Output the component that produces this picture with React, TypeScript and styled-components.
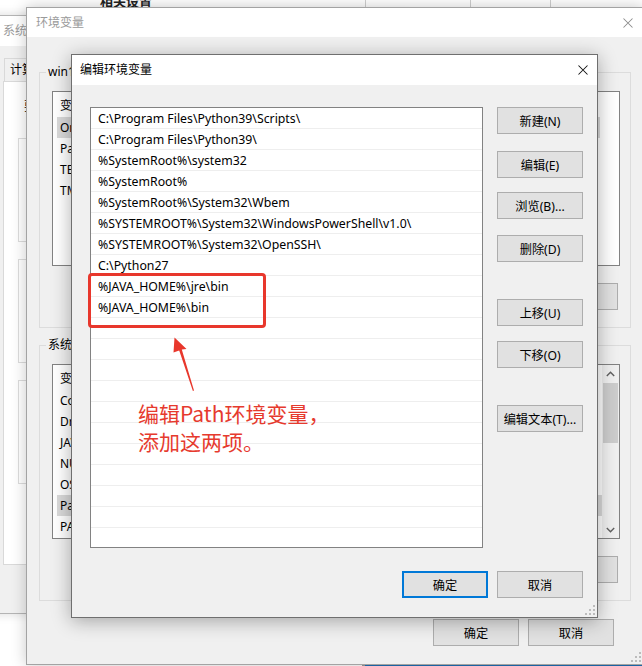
import React from "react";
import styled, { createGlobalStyle } from "styled-components";

const UI_FONT = `"Noto Sans", "Noto Sans CJK SC", sans-serif`;

const GlobalStyle = createGlobalStyle`
  html, body { margin: 0; padding: 0; background: #fff; }
  body {
    width: 642px; height: 666px; overflow: hidden;
    font-family: ${UI_FONT}; font-size: 12px; color: #000;
  }
  * { box-sizing: border-box; }
`;

const Desktop = styled.div`
  position: relative;
  width: 642px;
  height: 666px;
  overflow: hidden;
  background: #fff;
`;

/* ---------- window far behind (settings page) ---------- */
const SettingsBackdrop = styled.div`
  position: absolute;
  left: 0;
  top: -30px;
  width: 642px;
  height: 40px;
  display: grid;
  grid-template-columns: 100px 265px 105px 80px 1fr;
  background: #fff;
`;
const SettingsHeading = styled.div`
  grid-column: 2;
  align-self: end;
  margin-bottom: 1px;
  font-size: 13px;
  line-height: 16px;
  font-weight: 600;
  color: #222;
`;
const SettingsCell = styled.div`
  border-left: 1px solid #cfcfcf;
`;

/* ---------- generic window ---------- */
const Window = styled.section<{ $x: number; $y: number; $w: number; $h: number; $z: number; $border: string; $shadow: string }>`
  position: absolute;
  left: ${(p) => p.$x}px;
  top: ${(p) => p.$y}px;
  width: ${(p) => p.$w}px;
  height: ${(p) => p.$h}px;
  z-index: ${(p) => p.$z};
  display: flex;
  flex-direction: column;
  background: #f0f0f0;
  border: 1px solid ${(p) => p.$border};
  box-shadow: ${(p) => p.$shadow};
`;
const TitleBar = styled.header<{ $h: number; $pad: number }>`
  height: ${(p) => p.$h}px;
  flex: none;
  display: flex;
  align-items: center;
  justify-content: space-between;
  padding-left: ${(p) => p.$pad}px;
  background: #fff;
`;
const TitleText = styled.span<{ $active?: boolean }>`
  font-size: 12px;
  line-height: 16px;
  color: ${(p) => (p.$active ? "#000" : "#9a9a9a")};
  white-space: nowrap;
`;
const CloseGlyph = styled.svg<{ $mr: number }>`
  width: 10px;
  height: 10px;
  margin-right: ${(p) => p.$mr}px;
  flex: none;
`;
const CloseIcon = ({ color, mr }: { color: string; mr: number }) => (
  <CloseGlyph $mr={mr} viewBox="0 0 10 10">
    <path d="M0.5 0.5 L9.5 9.5 M9.5 0.5 L0.5 9.5" stroke={color} strokeWidth="1.05" fill="none" />
  </CloseGlyph>
);

/* ---------- buttons ---------- */
const Button = styled.button<{ $default?: boolean; $mt?: number }>`
  width: 86px;
  height: 27px;
  flex: none;
  margin: ${(p) => p.$mt ?? 0}px 0 0 0;
  padding: 0;
  background: #e1e1e1;
  border: ${(p) => (p.$default ? "2px solid #0078d7" : "1px solid #adadad")};
  font-family: ${UI_FONT};
  font-size: 12.2px;
  color: #000;
  white-space: nowrap;
  cursor: default;
`;

/* ---------- system properties window (behind) ---------- */
const SysBody = styled.div`
  flex: 1;
  padding: 12px 14px 0 14px;
  display: flex;
  flex-direction: column;
`;
const TabStrip = styled.div`
  display: flex;
  height: 23px;
`;
const Tab = styled.div`
  margin-left: 1px;
  padding: 0 5px;
  line-height: 22px;
  border: 1px solid #d9d9d9;
  border-bottom: none;
  white-space: nowrap;
`;
const TabPanel = styled.div`
  height: 484px;
  background: #fff;
  border: 1px solid #d9d9d9;
  padding: 17px 14px;
  display: flex;
  flex-direction: column;
`;
const Notice = styled.div`
  padding-left: 6px;
  line-height: 16px;
  white-space: nowrap;
`;
const SysGroup = styled.div<{ $mt: number }>`
  height: 104px;
  margin-top: ${(p) => p.$mt}px;
  border: 1px solid #dcdcdc;
`;

/* ---------- environment variables window ---------- */
const EnvBody = styled.div`
  flex: 1;
  padding: 27px 12px 0 12px;
  display: flex;
  flex-direction: column;
`;
const Group = styled.fieldset<{ $mt?: number }>`
  margin: ${(p) => p.$mt ?? 0}px 0 0 0;
  width: 592px;
  padding: 11px 10px 17px 12px;
  border: 1px solid #dcdcdc;
  min-width: 0;
`;
const Legend = styled.legend`
  margin-left: -6px;
  padding: 0 2px;
  font-size: 12px;
  line-height: 16px;
  white-space: nowrap;
`;
const VarList = styled.div`
  width: 568px;
  height: 175px;
  background: #fff;
  border: 1px solid #828282;
  display: flex;
  overflow: hidden;
`;
const VarColumn = styled.div<{ $gutter: number }>`
  flex: 1;
  display: flex;
  flex-direction: column;
  padding-right: ${(p) => p.$gutter}px;
`;
const VarHeader = styled.div`
  height: 25px;
  flex: none;
  display: flex;
  align-items: center;
  padding-left: 7px;
  gap: 150px;
`;
const VarRow = styled.div<{ $selected?: boolean }>`
  height: 21px;
  flex: none;
  margin-left: 4px;
  padding-left: 3px;
  line-height: 21px;
  white-space: nowrap;
  background: ${(p) => (p.$selected ? "#d9d9d9" : "transparent")};
`;
const Scrollbar = styled.div`
  width: 17px;
  flex: none;
  display: flex;
  flex-direction: column;
  background: #f0f0f0;
`;
const ScrollArrow = styled.div`
  height: 17px;
  flex: none;
  display: flex;
  align-items: center;
  justify-content: center;
`;
const ScrollTrack = styled.div`
  flex: 1;
  display: flex;
  flex-direction: column;
  align-items: center;
  padding-top: 1px;
`;
const ScrollThumb = styled.div`
  width: 15px;
  height: 60px;
  background: #cdcdcd;
`;
const Chevron = ({ up }: { up?: boolean }) => (
  <svg width="9" height="6" viewBox="0 0 9 6">
    <path d={up ? "M0.8 5 L4.5 1.3 L8.2 5" : "M0.8 1 L4.5 4.7 L8.2 1"} stroke="#606060" strokeWidth="1.4" fill="none" />
  </svg>
);
const GroupButtons = styled.div`
  margin-top: 17px;
  padding-right: 2px;
  display: flex;
  justify-content: flex-end;
  gap: 9px;
`;
const EnvFooter = styled.div`
  margin-top: 18px;
  width: 592px;
  padding-right: 17px;
  display: flex;
  justify-content: flex-end;
  gap: 9px;
`;
const Grip = styled.svg<{ $r: number; $b: number }>`
  position: absolute;
  right: ${(p) => p.$r}px;
  bottom: ${(p) => p.$b}px;
  width: 10px;
  height: 10px;
`;
const GripIcon = ({ r, b }: { r: number; b: number }) => (
  <Grip $r={r} $b={b} viewBox="0 0 10 10">
    {[
      [8, 0],
      [4, 4],
      [8, 4],
      [0, 8],
      [4, 8],
      [8, 8],
    ].map(([x, y], i) => (
      <rect key={i} x={x} y={y} width="2" height="2" fill="#bcbcbc" />
    ))}
  </Grip>
);

/* ---------- edit dialog ---------- */
const DialogBody = styled.div`
  flex: 1;
  padding: 22px 14px 19px 18px;
  display: grid;
  grid-template-columns: 393px 86px;
  grid-template-rows: 441px 27px;
  column-gap: 14px;
  row-gap: 23px;
`;
const PathList = styled.div`
  background: #fff;
  border: 1px solid #828282;
  display: flex;
  flex-direction: column;
  overflow: hidden;
`;
const PathRow = styled.div`
  height: 21px;
  flex: none;
  padding-left: 7px;
  font-size: 12.3px;
  line-height: 21px;
  border-bottom: 1px solid #eeeeee;
  white-space: nowrap;
`;
const ButtonColumn = styled.div`
  display: flex;
  flex-direction: column;
`;
const DialogFooter = styled.div`
  grid-column: 1 / span 2;
  display: flex;
  justify-content: flex-end;
  gap: 9px;
`;

/* ---------- annotation overlay ---------- */
const Highlight = styled.div`
  position: absolute;
  left: 88px;
  top: 273px;
  width: 178px;
  height: 55px;
  z-index: 5;
  border: 3px solid #e8372c;
  border-radius: 4px;
`;
const ArrowSvg = styled.svg`
  position: absolute;
  left: 170px;
  top: 332px;
  width: 30px;
  height: 62px;
  z-index: 5;
`;
const Note = styled.div`
  position: absolute;
  left: 138px;
  top: 399px;
  z-index: 5;
  font-family: "Noto Sans CJK SC", sans-serif;
  font-size: 21px;
  line-height: 28px;
  color: #e63a2e;
  white-space: nowrap;
`;
const Taskbar = styled.div`
  position: absolute;
  left: 362px;
  top: 664px;
  width: 280px;
  height: 2px;
  z-index: 1;
  display: flex;
`;
const TaskbarEdge = styled.div`
  width: 3px;
  background: #9a9a9a;
`;
const TaskbarFill = styled.div`
  flex: 1;
  background: #1f6fb5;
`;

const paths = [
  "C:\\Program Files\\Python39\\Scripts\\",
  "C:\\Program Files\\Python39\\",
  "%SystemRoot%\\system32",
  "%SystemRoot%",
  "%SystemRoot%\\System32\\Wbem",
  "%SYSTEMROOT%\\System32\\WindowsPowerShell\\v1.0\\",
  "%SYSTEMROOT%\\System32\\OpenSSH\\",
  "C:\\Python27",
  "%JAVA_HOME%\\jre\\bin",
  "%JAVA_HOME%\\bin",
];
const rows = [...paths, ...Array(10).fill("")];

const userVars = ["OneDrive", "Path", "TEMP", "TMP"];
const sysVars = ["ComSpec", "DriverData", "JAVA_HOME", "NUMBER_OF_PROCESSORS", "OS", "Path", "PATHEXT"];

const sideButtons: { label: string; mt: number }[] = [
  { label: "新建(N)", mt: 0 },
  { label: "编辑(E)", mt: 17 },
  { label: "浏览(B)...", mt: 14 },
  { label: "删除(D)", mt: 16 },
  { label: "上移(U)", mt: 37 },
  { label: "下移(O)", mt: 15 },
  { label: "编辑文本(T)...", mt: 37 },
];

export default function App() {
  return (
    <>
      <GlobalStyle />
      <Desktop>
        <SettingsBackdrop>
          <SettingsHeading>相关设置</SettingsHeading>
          <SettingsCell />
          <SettingsCell />
          <SettingsCell />
        </SettingsBackdrop>

        <Window $x={-12} $y={15} $w={420} $h={599} $z={1} $border="#b4b4b4" $shadow="0 0 10px rgba(0,0,0,0.15)">
          <TitleBar $h={30} $pad={14}>
            <TitleText>系统属性</TitleText>
          </TitleBar>
          <SysBody>
            <TabStrip>
              <Tab>计算机名</Tab>
            </TabStrip>
            <TabPanel>
              <Notice>要进行大多数更改，你必须作为管理员登录。</Notice>
              <SysGroup $mt={23} />
              <SysGroup $mt={17} />
              <SysGroup $mt={17} />
            </TabPanel>
          </SysBody>
        </Window>

        <Window $x={26} $y={7} $w={618} $h={658} $z={2} $border="#a3a3a3" $shadow="0 0 14px rgba(0,0,0,0.22)">
          <TitleBar $h={29} $pad={9}>
            <TitleText>环境变量</TitleText>
            <CloseIcon color="#8c8c8c" mr={10} />
          </TitleBar>
          <EnvBody>
            <Group>
              <Legend>win10 的用户变量(U)</Legend>
              <VarList>
                <VarColumn $gutter={19}>
                  <VarHeader>
                    <span>变量</span>
                    <span>值</span>
                  </VarHeader>
                  {userVars.map((v, i) => (
                    <VarRow key={v} $selected={i === 0}>
                      {v}
                    </VarRow>
                  ))}
                </VarColumn>
              </VarList>
              <GroupButtons>
                <Button>新建(N)...</Button>
                <Button>编辑(E)...</Button>
                <Button>删除(D)</Button>
              </GroupButtons>
            </Group>
            <Group $mt={9}>
              <Legend>系统变量(S)</Legend>
              <VarList>
                <VarColumn $gutter={0}>
                  <VarHeader>
                    <span>变量</span>
                    <span>值</span>
                  </VarHeader>
                  {sysVars.map((v, i) => (
                    <VarRow key={v} $selected={i === 5}>
                      {v}
                    </VarRow>
                  ))}
                </VarColumn>
                <Scrollbar>
                  <ScrollArrow>
                    <Chevron up />
                  </ScrollArrow>
                  <ScrollTrack>
                    <ScrollThumb />
                  </ScrollTrack>
                  <ScrollArrow>
                    <Chevron />
                  </ScrollArrow>
                </Scrollbar>
              </VarList>
              <GroupButtons>
                <Button>新建(W)...</Button>
                <Button>编辑(I)...</Button>
                <Button>删除(L)</Button>
              </GroupButtons>
            </Group>
            <EnvFooter>
              <Button>确定</Button>
              <Button>取消</Button>
            </EnvFooter>
          </EnvBody>
          <GripIcon r={2} b={2} />
        </Window>

        <Window $x={71} $y={54} $w={527} $h={564} $z={3} $border="#6f6f6f" $shadow="0 3px 18px rgba(0,0,0,0.32)">
          <TitleBar $h={30} $pad={8}>
            <TitleText $active>编辑环境变量</TitleText>
            <CloseIcon color="#111" mr={9} />
          </TitleBar>
          <DialogBody>
            <PathList>
              {rows.map((p, i) => (
                <PathRow key={i}>{p}</PathRow>
              ))}
            </PathList>
            <ButtonColumn>
              {sideButtons.map((b) => (
                <Button key={b.label} $mt={b.mt}>
                  {b.label}
                </Button>
              ))}
            </ButtonColumn>
            <DialogFooter>
              <Button $default>确定</Button>
              <Button>取消</Button>
            </DialogFooter>
          </DialogBody>
          <GripIcon r={2} b={2} />
        </Window>

        <Highlight />
        <ArrowSvg viewBox="170 332 30 62">
          <polygon
            points="174.5,337.5 186.5,349 181.8,349.6 194,390.6 192.9,390.9 179.2,350.6 173.5,352.5"
            fill="#e8372c"
          />
        </ArrowSvg>
        <Note>
          编辑Path环境变量，
          <br />
          添加这两项。
        </Note>

        <Taskbar>
          <TaskbarEdge />
          <TaskbarFill />
        </Taskbar>
      </Desktop>
    </>
  );
}
